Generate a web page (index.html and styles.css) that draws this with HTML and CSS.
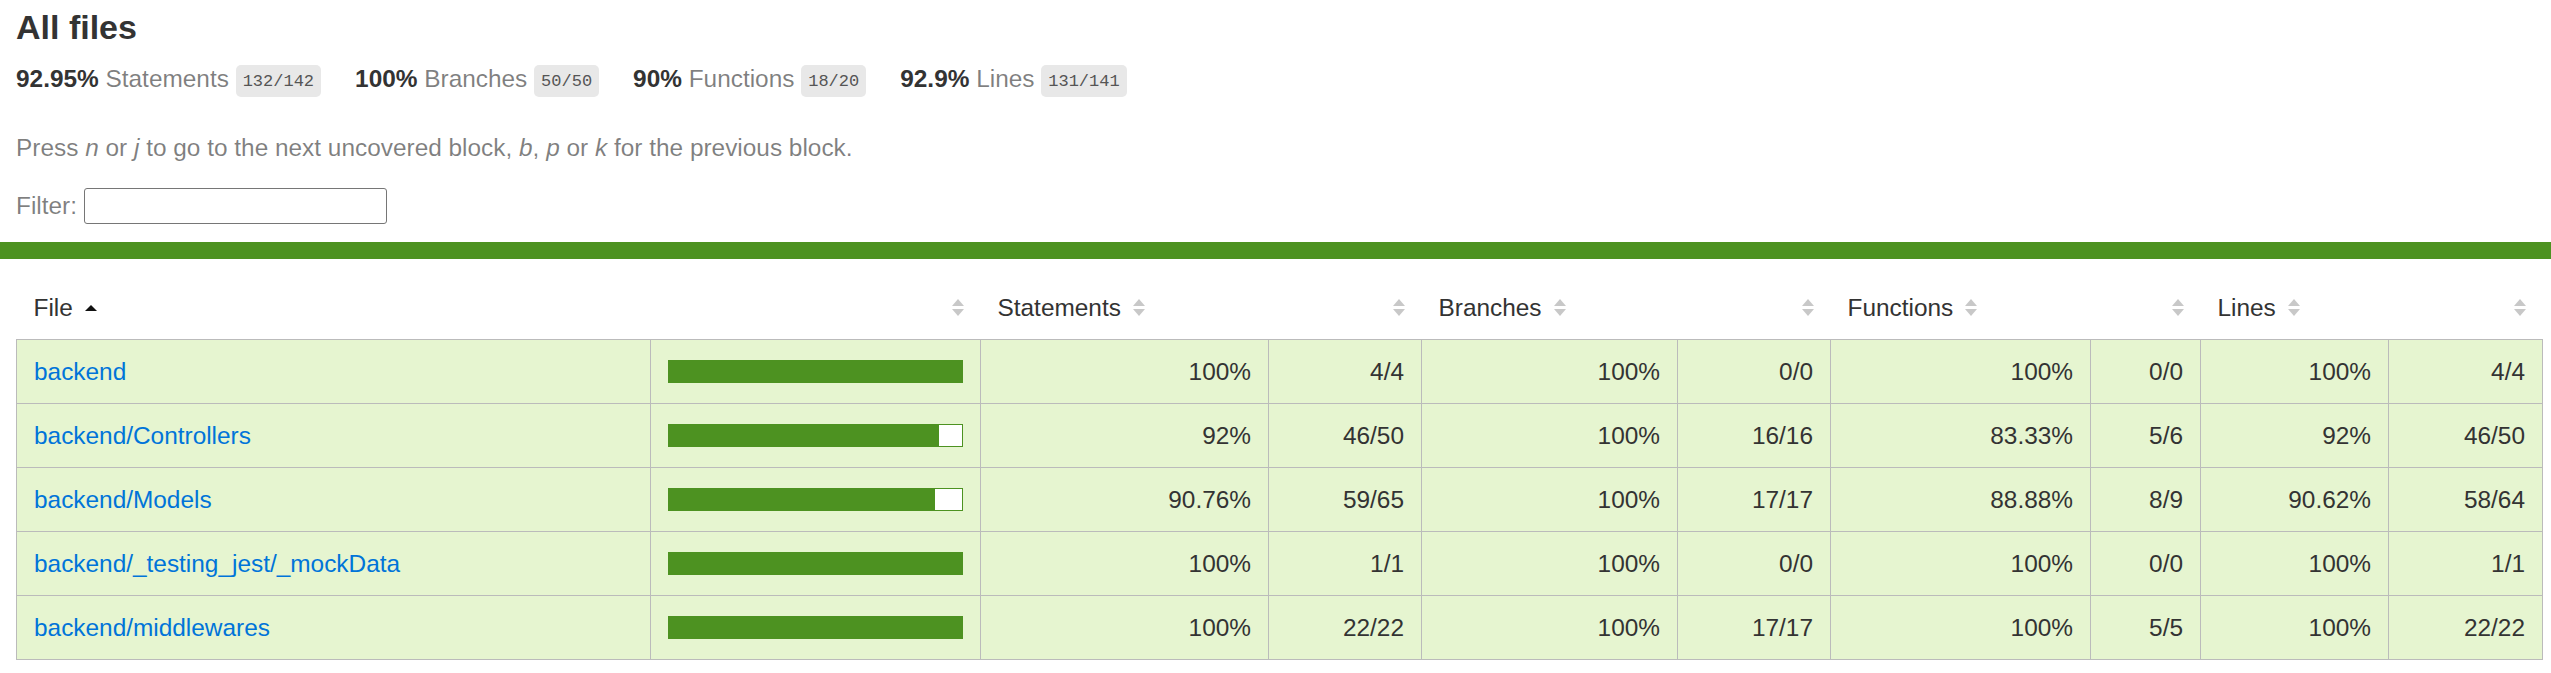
FILE: index.html
```html
<!DOCTYPE html>
<html lang="en">
<head>
<meta charset="utf-8">
<title>Code coverage report for All files</title>
<link rel="stylesheet" href="styles.css">
</head>
<body>
<div class="top">
  <h1>All files</h1>
  <div class="summary">
    <div class="summary-item"><span class="strong">92.95% </span><span class="quiet">Statements</span> <span class="fraction">132/142</span></div>
    <div class="summary-item"><span class="strong">100% </span><span class="quiet">Branches</span> <span class="fraction">50/50</span></div>
    <div class="summary-item"><span class="strong">90% </span><span class="quiet">Functions</span> <span class="fraction">18/20</span></div>
    <div class="summary-item"><span class="strong">92.9% </span><span class="quiet">Lines</span> <span class="fraction">131/141</span></div>
  </div>
  <p class="quiet hint">Press <em>n</em> or <em>j</em> to go to the next uncovered block, <em>b</em>, <em>p</em> or <em>k</em> for the previous block.</p>
  <div class="quiet filter">Filter: <input type="search" class="file-search"></div>
</div>
<div class="status-line"></div>
<div class="table-wrap">
<table class="coverage-summary">
  <colgroup>
    <col class="c-file"><col class="c-pic"><col class="c-spct"><col class="c-sabs"><col class="c-bpct"><col class="c-babs"><col class="c-fpct"><col class="c-fabs"><col class="c-lpct"><col class="c-labs">
  </colgroup>
  <thead>
    <tr>
      <th class="file">File<svg class="sorter" viewBox="0 0 12 17"><polygon points="0,12 6,6 12,12" fill="#111"/></svg></th>
      <th class="pic"><svg class="sorter" viewBox="0 0 12 17"><polygon points="0,7 6,0 12,7" class="arr"/><polygon points="0,10 12,10 6,17" class="arr"/></svg></th>
      <th class="pct">Statements<svg class="sorter" viewBox="0 0 12 17"><polygon points="0,7 6,0 12,7" class="arr"/><polygon points="0,10 12,10 6,17" class="arr"/></svg></th>
      <th class="abs"><svg class="sorter" viewBox="0 0 12 17"><polygon points="0,7 6,0 12,7" class="arr"/><polygon points="0,10 12,10 6,17" class="arr"/></svg></th>
      <th class="pct">Branches<svg class="sorter" viewBox="0 0 12 17"><polygon points="0,7 6,0 12,7" class="arr"/><polygon points="0,10 12,10 6,17" class="arr"/></svg></th>
      <th class="abs"><svg class="sorter" viewBox="0 0 12 17"><polygon points="0,7 6,0 12,7" class="arr"/><polygon points="0,10 12,10 6,17" class="arr"/></svg></th>
      <th class="pct">Functions<svg class="sorter" viewBox="0 0 12 17"><polygon points="0,7 6,0 12,7" class="arr"/><polygon points="0,10 12,10 6,17" class="arr"/></svg></th>
      <th class="abs"><svg class="sorter" viewBox="0 0 12 17"><polygon points="0,7 6,0 12,7" class="arr"/><polygon points="0,10 12,10 6,17" class="arr"/></svg></th>
      <th class="pct">Lines<svg class="sorter" viewBox="0 0 12 17"><polygon points="0,7 6,0 12,7" class="arr"/><polygon points="0,10 12,10 6,17" class="arr"/></svg></th>
      <th class="abs"><svg class="sorter" viewBox="0 0 12 17"><polygon points="0,7 6,0 12,7" class="arr"/><polygon points="0,10 12,10 6,17" class="arr"/></svg></th>
    </tr>
  </thead>
  <tbody>
    <tr>
      <td class="file"><a href="#">backend</a></td>
      <td class="pic"><div class="chart"><div class="cover-fill" style="width:100%"></div></div></td>
      <td class="pct">100%</td><td class="abs">4/4</td>
      <td class="pct">100%</td><td class="abs">0/0</td>
      <td class="pct">100%</td><td class="abs">0/0</td>
      <td class="pct">100%</td><td class="abs">4/4</td>
    </tr>
    <tr>
      <td class="file"><a href="#">backend/Controllers</a></td>
      <td class="pic"><div class="chart"><div class="cover-fill" style="width:92%"></div><div class="cover-empty"></div></div></td>
      <td class="pct">92%</td><td class="abs">46/50</td>
      <td class="pct">100%</td><td class="abs">16/16</td>
      <td class="pct">83.33%</td><td class="abs">5/6</td>
      <td class="pct">92%</td><td class="abs">46/50</td>
    </tr>
    <tr>
      <td class="file"><a href="#">backend/Models</a></td>
      <td class="pic"><div class="chart"><div class="cover-fill" style="width:90.76%"></div><div class="cover-empty"></div></div></td>
      <td class="pct">90.76%</td><td class="abs">59/65</td>
      <td class="pct">100%</td><td class="abs">17/17</td>
      <td class="pct">88.88%</td><td class="abs">8/9</td>
      <td class="pct">90.62%</td><td class="abs">58/64</td>
    </tr>
    <tr>
      <td class="file"><a href="#">backend/_testing_jest/_mockData</a></td>
      <td class="pic"><div class="chart"><div class="cover-fill" style="width:100%"></div></div></td>
      <td class="pct">100%</td><td class="abs">1/1</td>
      <td class="pct">100%</td><td class="abs">0/0</td>
      <td class="pct">100%</td><td class="abs">0/0</td>
      <td class="pct">100%</td><td class="abs">1/1</td>
    </tr>
    <tr>
      <td class="file"><a href="#">backend/middlewares</a></td>
      <td class="pic"><div class="chart"><div class="cover-fill" style="width:100%"></div></div></td>
      <td class="pct">100%</td><td class="abs">22/22</td>
      <td class="pct">100%</td><td class="abs">17/17</td>
      <td class="pct">100%</td><td class="abs">5/5</td>
      <td class="pct">100%</td><td class="abs">22/22</td>
    </tr>
  </tbody>
</table>
</div>
</body>
</html>
```

FILE: styles.css
```css
*, *::before, *::after { box-sizing: border-box; }

html, body {
  margin: 0;
  padding: 0;
}

body {
  font-family: "Liberation Sans", Arial, Helvetica, sans-serif;
  font-size: 24.4px;
  color: #333;
  background: #fff;
}

.top {
  padding: 8px 17px 18px 16px;
}

h1 {
  font-size: 34px;
  line-height: 39px;
  margin: 0;
  font-weight: bold;
}

.summary {
  display: flex;
  padding: 18px 0 17px 0;
  line-height: 28px;
}

.summary-item {
  padding-right: 34px;
  white-space: nowrap;
}

.strong { font-weight: bold; }

.quiet { color: rgba(0, 0, 0, 0.5); }

.fraction {
  font-family: "Liberation Mono", Consolas, monospace;
  font-size: 17px;
  line-height: 19px;
  color: #555;
  background: #e8e8e8;
  padding: 6.5px 7px;
  border-radius: 5px;
  vertical-align: middle;
}

.hint {
  margin: 24px 0;
  line-height: 28px;
}

.filter {
  display: flex;
  align-items: center;
  padding-top: 2px;
  line-height: 28px;
}

.file-search {
  margin-left: 7px;
  width: 303px;
  height: 36px;
  border: 1px solid #767676;
  border-radius: 3px;
  padding: 0 4px;
  font: inherit;
  background: #fff;
}

.status-line {
  height: 17px;
  background: rgb(77, 146, 33);
}

.table-wrap {
  padding: 17px 9px 17px 16px;
}

.coverage-summary {
  width: 100%;
  border-collapse: collapse;
  table-layout: fixed;
}

.c-file { width: 634px; }
.c-pic  { width: 330px; }
.c-spct { width: 288px; }
.c-sabs { width: 153px; }
.c-bpct { width: 256px; }
.c-babs { width: 153px; }
.c-fpct { width: 260px; }
.c-fabs { width: 110px; }
.c-lpct { width: 188px; }
.c-labs { width: 154px; }

.coverage-summary tr {
  border-bottom: 1px solid #bbb;
}

.coverage-summary tbody {
  border: 1px solid #bbb;
}

.coverage-summary th,
.coverage-summary td {
  padding: 17px;
  line-height: 29px;
}

.coverage-summary th {
  text-align: left;
  font-weight: normal;
  white-space: nowrap;
}

.coverage-summary td {
  border-right: 1px solid #bbb;
  background: rgb(230, 245, 208);
  vertical-align: middle;
}

.coverage-summary td:last-child {
  border-right: none;
}

.coverage-summary th.pic,
.coverage-summary th.abs,
.coverage-summary td.pct,
.coverage-summary td.abs {
  text-align: right;
}

.coverage-summary td.file {
  white-space: nowrap;
}

.coverage-summary a {
  color: #0074d9;
  text-decoration: none;
}

.sorter {
  display: inline-block;
  width: 12px;
  height: 17px;
  margin-left: 12px;
}

.sorter .arr {
  fill: #c8c8c8;
}

.chart {
  display: flex;
  height: 23px;
  border: 1px solid rgb(77, 146, 33);
}

.cover-fill {
  height: 100%;
  background: rgb(77, 146, 33);
}

.cover-empty {
  flex: 1;
  height: 100%;
  background: #fff;
}
```
